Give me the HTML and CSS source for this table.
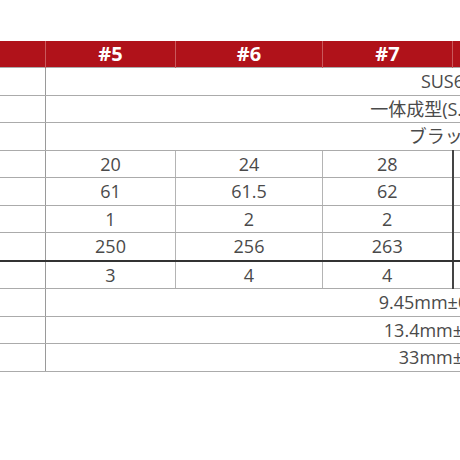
FILE: index.html
```html
<!DOCTYPE html>
<html lang="ja">
<head>
<meta charset="utf-8">
<title>スペック表</title>
<link rel="stylesheet" href="styles.css">
</head>
<body>
<div class="wrap">
  <table class="spec">
    <colgroup>
      <col class="c-label">
      <col class="c-a">
      <col class="c-b">
      <col class="c-a">
      <col class="c-a">
      <col class="c-b">
      <col class="c-a">
    </colgroup>
    <thead>
      <tr>
        <th>番手</th>
        <th>#5</th>
        <th>#6</th>
        <th>#7</th>
        <th>#8</th>
        <th>#9</th>
        <th>PW</th>
      </tr>
    </thead>
    <tbody>
      <tr><td class="lbl">素材</td><td colspan="6">SUS630</td></tr>
      <tr><td class="lbl">製法</td><td colspan="6">一体成型(S.25C軟鉄)</td></tr>
      <tr><td class="lbl">仕上げ</td><td colspan="6">ブラックIP</td></tr>
      <tr class="num"><td class="lbl">ロフト</td><td>20</td><td>24</td><td class="sep">28</td><td>32</td><td>36</td><td>41</td></tr>
      <tr class="num"><td class="lbl">ライ角</td><td>61</td><td>61.5</td><td class="sep">62</td><td>62.5</td><td>63</td><td>63.5</td></tr>
      <tr class="num"><td class="lbl">OS</td><td>1</td><td>2</td><td class="sep">2</td><td>2</td><td>3</td><td>3</td></tr>
      <tr class="num thick"><td class="lbl">重量</td><td>250</td><td>256</td><td class="sep">263</td><td>270</td><td>277</td><td>284</td></tr>
      <tr class="num"><td class="lbl">BNC</td><td>3</td><td>4</td><td class="sep">4</td><td>5</td><td>6</td><td>7</td></tr>
      <tr><td class="lbl">内径</td><td colspan="6">9.45mm±0.05mm</td></tr>
      <tr><td class="lbl">外径</td><td colspan="6">13.4mm±0.3mm</td></tr>
      <tr><td class="lbl">深さ</td><td colspan="6">33mm±1mm</td></tr>
    </tbody>
  </table>
</div>
</body>
</html>
```
FILE: styles.css
```css
html, body {
  margin: 0;
  padding: 0;
  background: #ffffff;
}

.wrap {
  width: 460px;
  height: 460px;
  overflow: hidden;
  padding-top: 41px;
  box-sizing: border-box;
}

.spec {
  border-collapse: collapse;
  table-layout: fixed;
  width: 1014px;
  margin-left: -155px;
  font-family: "Open Sans", "Noto Sans CJK JP", sans-serif;
  font-size: 18px;
  color: #4a4a4a;
}

.c-label { width: 200px; }
.c-a { width: 130px; }
.c-b { width: 147px; }

.spec th {
  background: #b0121a;
  color: #ffffff;
  font-weight: 700;
  font-size: 20px;
  height: 26px;
  padding: 0;
  line-height: 26px;
  text-align: center;
  border-left: 1px solid #c9585c;
  border-right: 1px solid #c9585c;
}

.spec td {
  height: 26.5px;
  padding: 0;
  line-height: 26px;
  text-align: center;
  white-space: nowrap;
  border-top: 1px solid #ababab;
  border-bottom: 1px solid #ababab;
  border-left: 1px solid #9a9a9a;
}

.spec td.lbl {
  border-right: 1px solid #9a9a9a;
}

.spec tr.num td {
  border-right: 1px solid #b4b4b4;
}

.spec tr.num td.lbl {
  border-right: 1px solid #9a9a9a;
}

.spec tr.num td.sep {
  border-right: 2px solid #444444;
}

.spec tr.thick td {
  border-bottom: 2px solid #333333;
}
```
